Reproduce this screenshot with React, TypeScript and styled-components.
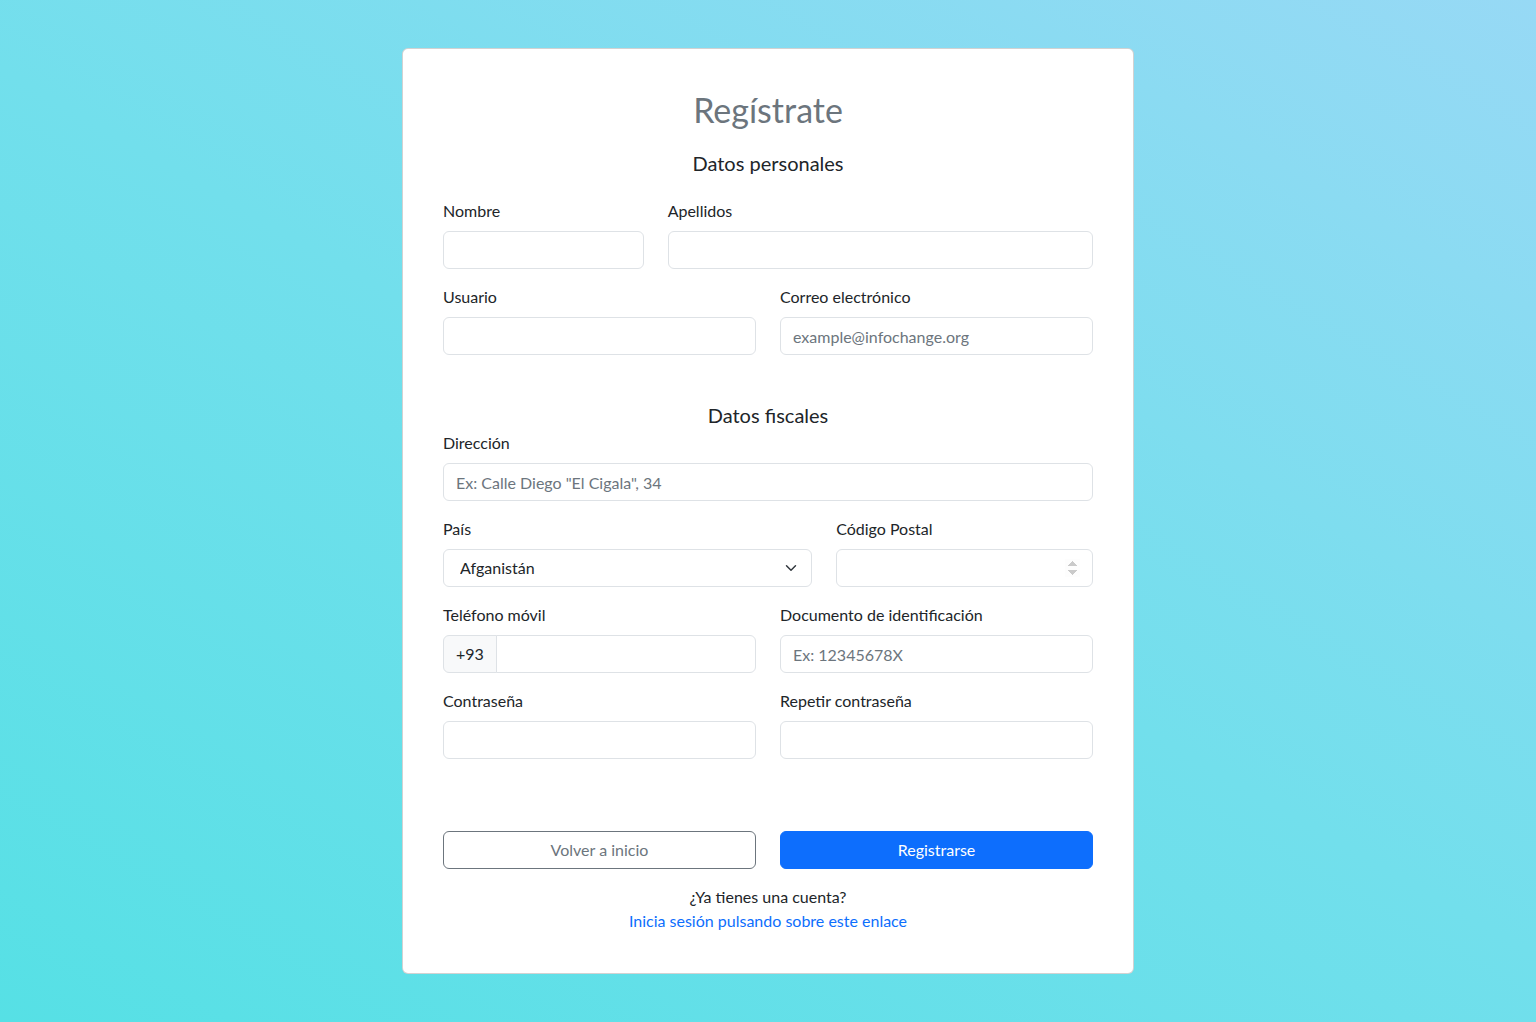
import React from "react";
import styled, { createGlobalStyle } from "styled-components";

const GlobalStyle = createGlobalStyle`
  * { box-sizing: border-box; }
  html, body { margin: 0; padding: 0; }
  body {
    min-height: 100vh;
    font-family: Lato, "Noto Sans", sans-serif;
    font-size: 16px;
    line-height: 1.5;
    color: #212529;
    background: linear-gradient(30deg, #56e0e5 0%, #72dfec 50%, #97d9f5 100%);
    background-attachment: fixed;
  }
`;

const Page = styled.div`
  display: flex;
  justify-content: center;
  padding: 48px 0;
`;

const Card = styled.form`
  width: 732px;
  background: #fff;
  border: 1px solid rgba(0, 0, 0, 0.175);
  border-radius: 6px;
  padding: 40px;
`;

const Title = styled.h1`
  margin: 0;
  text-align: center;
  font-size: 34px;
  font-weight: 400;
  line-height: 41px;
  color: #6c757d;
`;

const Section = styled.h5<{ $top: number; $bottom: number }>`
  margin: ${(p) => p.$top}px 0 ${(p) => p.$bottom}px;
  text-align: center;
  font-size: 20px;
  font-weight: 400;
  line-height: 24px;
`;

// bootstrap-like 12 column row with a 24px gutter
const Row = styled.div<{ $spans?: number[]; $mb?: number }>`
  display: grid;
  grid-template-columns: ${(p) =>
    (p.$spans ?? [12])
      .map((s) => `calc((100% + 24px) * ${s} / 12 - 24px)`)
      .join(" ")};
  column-gap: 24px;
  margin-bottom: ${(p) => p.$mb ?? 16}px;
`;

const Field = styled.div`
  display: flex;
  flex-direction: column;
`;

const Label = styled.label`
  margin-bottom: 8px;
  line-height: 24px;
`;

const Input = styled.input`
  width: 100%;
  height: 38px;
  padding: 6px 12px;
  font: inherit;
  color: #212529;
  background: #fff;
  border: 1px solid #dee2e6;
  border-radius: 6px;
  outline: none;
  &::placeholder { color: #6c757d; opacity: 1; }
  &::-webkit-inner-spin-button { opacity: 0.45; }
`;

const Select = styled.select`
  width: 100%;
  height: 38px;
  padding: 6px 36px 6px 16px;
  font: inherit;
  color: #212529;
  border: 1px solid #dee2e6;
  border-radius: 6px;
  appearance: none;
  outline: none;
  background: #fff
    url("data:image/svg+xml,%3csvg xmlns='http://www.w3.org/2000/svg' viewBox='0 0 16 16'%3e%3cpath fill='none' stroke='%23343a40' stroke-linecap='round' stroke-linejoin='round' stroke-width='2' d='m2 5 6 6 6-6'/%3e%3c/svg%3e")
    no-repeat right 12px center / 16px 12px;
`;

const InputGroup = styled.div`
  display: flex;
  height: 38px;
  & > input {
    border-top-left-radius: 0;
    border-bottom-left-radius: 0;
    margin-left: -1px;
  }
`;

const Addon = styled.span`
  display: flex;
  align-items: center;
  padding: 0 12px;
  background: #f8f9fa;
  border: 1px solid #dee2e6;
  border-radius: 6px 0 0 6px;
  color: #212529;
`;

const Button = styled.button<{ $primary?: boolean }>`
  height: 38px;
  font: inherit;
  border-radius: 6px;
  cursor: pointer;
  border: 1px solid ${(p) => (p.$primary ? "#0d6efd" : "#6c757d")};
  background: ${(p) => (p.$primary ? "#0d6efd" : "#fff")};
  color: ${(p) => (p.$primary ? "#fff" : "#6c757d")};
`;

const Footer = styled.div`
  margin-top: 16px;
  text-align: center;
  line-height: 24px;
`;

const Link = styled.a`
  color: #0d6efd;
  text-decoration: none;
`;

const App: React.FC = () => {
  return (
    <>
      <GlobalStyle />
      <Page>
        <Card onSubmit={(e) => e.preventDefault()}>
          <Title>Regístrate</Title>
          <Section $top={21} $bottom={24}>Datos personales</Section>

          <Row $spans={[4, 8]}>
            <Field>
              <Label>Nombre</Label>
              <Input type="text" />
            </Field>
            <Field>
              <Label>Apellidos</Label>
              <Input type="text" />
            </Field>
          </Row>
          <Row $spans={[6, 6]} $mb={0}>
            <Field>
              <Label>Usuario</Label>
              <Input type="text" />
            </Field>
            <Field>
              <Label>Correo electrónico</Label>
              <Input type="email" placeholder="example@infochange.org" />
            </Field>
          </Row>

          <Section $top={48} $bottom={4}>Datos fiscales</Section>

          <Row>
            <Field>
              <Label>Dirección</Label>
              <Input type="text" placeholder='Ex: Calle Diego "El Cigala", 34' />
            </Field>
          </Row>
          <Row $spans={[7, 5]}>
            <Field>
              <Label>País</Label>
              <Select defaultValue="AF">
                <option value="AF">Afganistán</option>
                <option value="AL">Albania</option>
                <option value="DE">Alemania</option>
              </Select>
            </Field>
            <Field>
              <Label>Código Postal</Label>
              <Input type="number" />
            </Field>
          </Row>
          <Row $spans={[6, 6]}>
            <Field>
              <Label>Teléfono móvil</Label>
              <InputGroup>
                <Addon>+93</Addon>
                <Input type="tel" />
              </InputGroup>
            </Field>
            <Field>
              <Label>Documento de identificación</Label>
              <Input type="text" placeholder="Ex: 12345678X" />
            </Field>
          </Row>
          <Row $spans={[6, 6]} $mb={72}>
            <Field>
              <Label>Contraseña</Label>
              <Input type="password" />
            </Field>
            <Field>
              <Label>Repetir contraseña</Label>
              <Input type="password" />
            </Field>
          </Row>

          <Row $spans={[6, 6]} $mb={0}>
            <Button type="button">Volver a inicio</Button>
            <Button type="submit" $primary>
              Registrarse
            </Button>
          </Row>

          <Footer>
            <div>¿Ya tienes una cuenta?</div>
            <Link href="#">Inicia sesión pulsando sobre este enlace</Link>
          </Footer>
        </Card>
      </Page>
    </>
  );
};

export default App;
